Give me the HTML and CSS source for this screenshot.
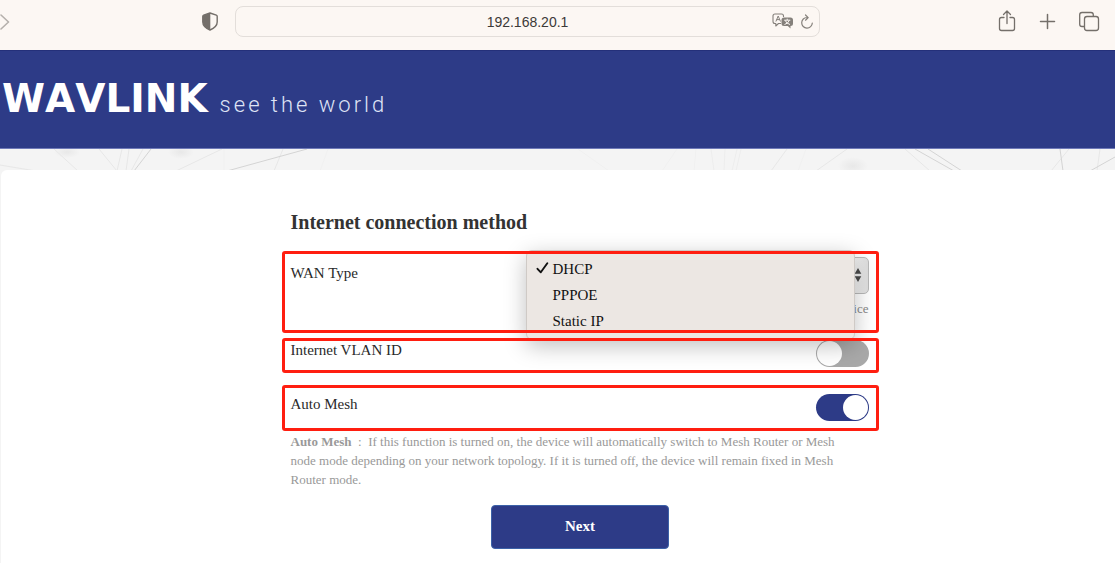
FILE: index.html
```html
<!DOCTYPE html>
<html lang="en">
<head>
<meta charset="utf-8">
<title>Internet connection method</title>
<link rel="stylesheet" href="styles.css">
</head>
<body>
<div class="toolbar">
  <div class="toolbar-left">
    <button class="icon-button forward" type="button" aria-label="Forward">
      <svg width="10" height="18" viewBox="0 0 10 18"><path d="M1 2l7.500 7L1 16" fill="none" stroke="#b5b0ac" stroke-width="1.600" stroke-linecap="round" stroke-linejoin="round"/></svg>
    </button>
    <button class="icon-button shield" type="button" aria-label="Privacy report">
      <svg width="16" height="19" viewBox="0 0 16 19"><path d="M8 1L14.300 3.200Q15.200 3.600 15.200 4.500V10Q15.200 15 8 18Q.8 15 .8 10V4.500Q.8 3.600 1.700 3.200Z" fill="none" stroke="#746f6a" stroke-width="1.400" stroke-linejoin="round"/><path d="M8.300 1V18Q.8 15 .8 10V4.500Q.8 3.600 1.700 3.200Z" fill="#746f6a"/></svg>
    </button>
  </div>
  <div class="address">
    <input class="address-input" type="text" value="192.168.20.1" aria-label="Address">
    <div class="address-tools">
      <button class="icon-button" type="button" aria-label="Translate">
        <svg width="22" height="17" viewBox="0 0 22 17"><path d="M9 10.500H6.500L3.800 13V10.500H3Q1 10.500 1 8.500V3Q1 1 3 1H9.500Q11.500 1 11.500 3V4" fill="none" stroke="#85807b" stroke-width="1.100" stroke-linejoin="round"/><path d="M3.900 8.500L6.200 3L8.500 8.500M4.700 6.600H7.700" fill="none" stroke="#85807b"/><path d="M12 4.500H18.500Q21 4.500 21 7V10.500Q21 13 18.500 13V15.600L15.800 13H12Q9.500 13 9.500 10.500V7Q9.500 4.500 12 4.500Z" fill="#85807b"/><path d="M12.200 7.200H18.300M15.200 5.700V7.200M13.200 7.400Q14.300 10.500 18 11.500M17.300 7.400Q16.200 10.500 12.500 11.500" fill="none" stroke="#fcf7f3"/></svg>
      </button>
      <button class="icon-button" type="button" aria-label="Reload">
        <svg width="14" height="16" viewBox="0 0 14 16"><path d="M7.500 3.500H7A5.300 5.300 0 1 0 12.300 9M5.500 1L8.200 3.600L5.500 6.200" fill="none" stroke="#85807b" stroke-width="1.200" stroke-linecap="round" stroke-linejoin="round"/></svg>
      </button>
    </div>
  </div>
  <div class="toolbar-right">
    <button class="icon-button" type="button" aria-label="Share">
      <svg width="24" height="24" viewBox="0 1 24 24"><path d="M9 8.500H6.500Q4.500 8.500 4.500 10.500V19.500Q4.500 21.500 6.500 21.500H17.500Q19.500 21.500 19.500 19.500V10.500Q19.500 8.500 17.500 8.500H15M12 14.500V2.500M8.500 5.500L12 2L15.500 5.500" fill="none" stroke="#746f6a" stroke-width="1.300" stroke-linecap="round" stroke-linejoin="round"/></svg>
    </button>
    <button class="icon-button" type="button" aria-label="New tab">
      <svg width="24" height="24" viewBox="0 1 24 24"><path d="M11.500 5.500V19.500M4.500 12.500H18.500" fill="none" stroke="#746f6a" stroke-width="1.500" stroke-linecap="round"/></svg>
    </button>
    <button class="icon-button" type="button" aria-label="Show all tabs">
      <svg width="24" height="24" viewBox="0 1 24 24"><path d="M7 17.500H5Q2.700 17.500 2.700 15.200V5.800Q2.700 3.500 5 3.500H14Q16.300 3.500 16.300 5.800V7" fill="none" stroke="#746f6a" stroke-width="1.300"/><rect x="7.500" y="7.500" width="14" height="14" rx="2.500" fill="none" stroke="#746f6a" stroke-width="1.300"/></svg>
    </button>
  </div>
</div>

<header class="banner">
  <span class="brand">WAVLINK</span>
  <span class="tagline">see the world</span>
</header>

<div class="backdrop">
  <svg class="mesh" viewBox="0 0 1115 22" preserveAspectRatio="xMinYMin slice" aria-hidden="true">
    <defs><radialGradient id="smudge"><stop offset="0" stop-color="#e8e8e8"/><stop offset="1" stop-color="#e8e8e8" stop-opacity="0"/></radialGradient></defs>
    <ellipse cx="67" cy="3" rx="13" ry="6" fill="url(#smudge)"/>
    <ellipse cx="181" cy="3" rx="13" ry="7" fill="url(#smudge)"/>
    <ellipse cx="853" cy="17" rx="15" ry="9" fill="url(#smudge)"/>
    <g fill="none" stroke="#e7e7e7">
      <path d="M0 16L36 22M54 0L78 22M99 0L117 22M122 0L117 22M129 0L126 22M143 0L131 22M222 0L176 22M283 0L274 22"/>
      <path d="M787 0L771 22M847 0L816 22M905 0L930 22M1069 0L1051 22M1100 0L1097 22"/>
    </g>
    <g fill="none" stroke="#ededed"><path d="M711 0L714 22M725 0L724 22M737 0L732 22M741 0L736 22"/></g>
    <g fill="none" stroke="#f0f0f0"><path d="M578 0L609 22M677 0L662 22M696 0L694 22M806 0L798 22M224 0V22M328 0L320 22"/></g>
    <g fill="none" stroke="#d4d4d4"><path d="M151 0L134 22M307 0L227 22M915 0L954 22M928 0L962 22M1060 0L1063 22M1115 8L1090 22"/></g>
  </svg>
</div>

<main class="panel">
  <form class="setup">
    <h1 class="title">Internet connection method</h1>

    <div class="field field-wan">
      <label class="label" for="wan">WAN Type</label>
      <div class="wan-control">
        <select class="wan-select" id="wan"><option></option></select>
        <svg class="wan-arrows" width="8" height="14" viewBox="0 0 8 14" aria-hidden="true"><path d="M4 0L7.300 5.700H.7ZM4 14L.7 8.300H7.300Z" fill="#4a4a4a"/></svg>
        <p class="hint">device</p>
        <ul class="menu" role="listbox" aria-label="WAN Type">
          <li class="menu-item" role="option" aria-selected="true"><svg class="check" width="13" height="12" viewBox="0 0 13 12"><path d="M1.500 6.800L4.800 10.300L11.300 1.300" fill="none" stroke="#111" stroke-width="1.900" stroke-linecap="round" stroke-linejoin="round"/></svg>DHCP</li>
          <li class="menu-item" role="option" aria-selected="false">PPPOE</li>
          <li class="menu-item" role="option" aria-selected="false">Static IP</li>
        </ul>
      </div>
    </div>

    <div class="field field-vlan">
      <label class="label" for="vlan">Internet VLAN ID</label>
      <input class="toggle" id="vlan" type="checkbox" role="switch">
    </div>

    <div class="field field-mesh">
      <label class="label" for="automesh">Auto Mesh</label>
      <input class="toggle" id="automesh" type="checkbox" role="switch" checked>
    </div>

    <p class="note"><b>Auto Mesh</b>&nbsp; :&nbsp; If this function is turned on, the device will automatically switch to Mesh Router or Mesh node mode depending on your network topology. If it is turned off, the device will remain fixed in Mesh Router mode.</p>

    <button class="next" type="button">Next</button>
  </form>
</main>
</body>
</html>
```
FILE: styles.css
```css
* {
  box-sizing: border-box;
}

body {
  margin: 0;
  min-height: 100vh;
  display: flex;
  flex-direction: column;
  background: #f4f4f4;
  color: #2a2a2a;
  font: 15px/20px "Liberation Serif", "Times New Roman", serif;
}

.toolbar {
  display: grid;
  grid-template-columns: 218fr 585fr 278fr;
  column-gap: 17px;
  align-items: center;
  padding: 6px 0 13px;
  background: #fcf7f3;
}

.toolbar-left {
  display: flex;
  align-items: center;
  justify-content: space-between;
}

.icon-button {
  display: flex;
  padding: 0;
  border: 0;
  background: none;
}

.address {
  display: flex;
  position: relative;
}

.address-input {
  width: 100%;
  height: 31px;
  padding: 0 60px;
  border: 1px solid #e3deda;
  border-radius: 8px;
  background: transparent;
  color: #3c3a38;
  font: 14px/20px "Liberation Sans", Arial, sans-serif;
  text-align: center;
}

.address-tools {
  position: absolute;
  top: 0;
  right: 6px;
  bottom: 0;
  display: flex;
  align-items: center;
  gap: 6px;
}

.toolbar-right {
  display: flex;
  justify-content: flex-end;
  gap: 17px;
  padding-right: 14px;
}

.banner {
  display: flex;
  align-items: baseline;
  gap: 12px;
  padding: 24px 2px 25px;
  border-top: 1px solid #24307a;
  border-bottom: 1px solid #6f7ab8;
  background: #2d3b87;
  color: #fff;
}

.brand {
  font: bold 39px/48px "DejaVu Sans", Verdana, sans-serif;
  font-kerning: none;
}

.tagline {
  color: #dfe3f5;
  font: 300 22px/28px Roboto, "Open Sans", sans-serif;
  letter-spacing: 3px;
}

.backdrop {
  height: 21px;
  overflow: hidden;
}

.mesh {
  display: block;
  width: 100%;
}

.panel {
  flex: 1;
  margin-left: 1px;
  padding: 40px 0 14px 44px;
  border-radius: 6px 0 0 0;
  background: #fff;
}

.setup {
  display: flex;
  flex-direction: column;
  width: 597px;
  max-width: 100%;
  margin: 0 auto;
}

.title {
  margin: 0 9px 17px;
  color: #333;
  font-size: 20px;
  line-height: 24px;
}

.field {
  position: relative;
  display: flex;
  justify-content: space-between;
  align-items: flex-start;
  padding: 0 10px 0 9px;
}

/* Outline sits above the open menu */
.field::after {
  content: "";
  position: absolute;
  inset: 0;
  z-index: 3;
  border: 3px solid #ff1e10;
  border-radius: 3px;
  pointer-events: none;
}

.field-wan {
  height: 82px;
  margin-bottom: 5px;
  padding-top: 6px;
}

.field-wan .label {
  padding-top: 6px;
}

.field-vlan {
  height: 35px;
  margin-bottom: 12px;
  padding-top: 2px;
}

.field-mesh {
  height: 46px;
  padding-top: 9px;
}

.wan-control {
  position: relative;
  width: 343px;
}

.wan-select {
  display: block;
  width: 100%;
  height: 37px;
  border: 1px solid #b9b9b9;
  border-radius: 5px;
  appearance: none;
  background: linear-gradient(90deg, #f2f2f2 96%, #dedede);
}

.wan-arrows {
  position: absolute;
  top: 11px;
  right: 7px;
}

.hint {
  margin: 5px 0 0;
  color: #888;
  font-size: 13px;
  text-align: right;
}

.menu {
  position: absolute;
  top: -7px;
  left: 0;
  right: 14px;
  z-index: 2;
  margin: 0;
  padding: 5px 0;
  border: 1px solid #cfcac6;
  border-radius: 6px;
  background: #ece7e3;
  box-shadow: 0 6px 22px rgba(0, 0, 0, 0.25);
  color: #111;
  list-style: none;
}

.menu-item {
  position: relative;
  padding-left: 26px;
  line-height: 26px;
}

.check {
  position: absolute;
  top: 6px;
  left: 9px;
}

.toggle {
  width: 53px;
  height: 27px;
  margin: 0;
  padding: 1px;
  border-radius: 14px;
  appearance: none;
  display: flex;
  background: #a9a9a9;
}

.toggle::before {
  content: "";
  width: 25px;
  height: 25px;
  border-radius: 50%;
  background: #fff;
}

.toggle:checked {
  justify-content: flex-end;
  background: #2d3b87;
}

.note {
  margin: 1px 36px 16px 9px;
  color: #999;
  font-size: 13px;
  line-height: 19px;
}

.next {
  align-self: center;
  width: 178px;
  height: 44px;
  padding: 0 0 2px;
  border: 1px solid #3c62a8;
  border-radius: 4px;
  background: #2d3b87;
  color: #fff;
  font: bold 15px/20px "Liberation Serif", "Times New Roman", serif;
}
```
